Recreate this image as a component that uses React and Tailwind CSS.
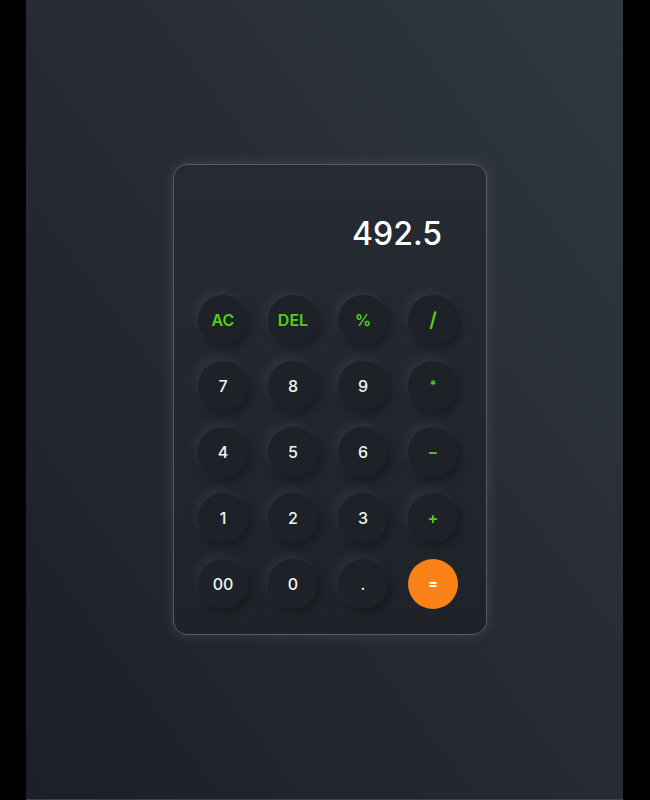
import React from 'react';

const keys = [
  { label: 'AC', kind: 'op' },
  { label: 'DEL', kind: 'op' },
  { label: '%', kind: 'op' },
  { label: '/', kind: 'op', big: true },
  { label: '7' },
  { label: '8' },
  { label: '9' },
  { label: '*', kind: 'op', small: true },
  { label: '4' },
  { label: '5' },
  { label: '6' },
  { label: '−', kind: 'op' },
  { label: '1' },
  { label: '2' },
  { label: '3' },
  { label: '+', kind: 'op' },
  { label: '00' },
  { label: '0' },
  { label: '.' },
  { label: '=', kind: 'eq' },
];

function Key({ k }) {
  if (k.kind === 'eq') {
    return (
      <button className="w-[50px] h-[50px] rounded-full bg-[#fa8219] text-white text-[15px] font-semibold flex items-center justify-center">
        {k.label}
      </button>
    );
  }
  const color = k.kind === 'op' ? 'text-[#52d017] font-semibold' : 'text-[#f3f4f6] font-medium';
  const size = k.big ? 'text-[20px]' : k.small ? 'text-[13px]' : 'text-[16px]';
  return (
    <button
      className={`w-[50px] h-[50px] rounded-full bg-[#1e2228] flex items-center justify-center shadow-[-4px_-5px_10px_rgba(255,255,255,0.06),3px_4px_10px_rgba(0,0,0,0.3)] ${color} ${size}`}
    >
      {k.label}
    </button>
  );
}

export default function App() {
  return (
    <div className="w-[650px] h-[800px] bg-black flex font-['Inter',sans-serif]">
      <div className="ml-[26px] w-[597px] h-[800px] bg-gradient-to-bl from-[#313740] via-[#262b33] to-[#1c1f25] pl-[147px] pt-[164px] border-b border-[#3b4350]">
        <div className="w-[314px] h-[471px] rounded-[14px] border border-[#575c64] bg-gradient-to-b from-[#262b33] to-[#1f2329] shadow-[0_0_14px_rgba(255,255,255,0.12)] pl-[24px] pr-[28px] flex flex-col">
          <div className="h-[130px] flex items-start justify-end pt-[53px] pr-[16px]">
            <span className="text-[32px] font-medium text-white leading-none">492.5</span>
          </div>
          <div className="grid grid-cols-4 gap-x-[20px] gap-y-[16px]">
            {keys.map((k, i) => (
              <Key key={i} k={k} />
            ))}
          </div>
        </div>
      </div>
    </div>
  );
}
